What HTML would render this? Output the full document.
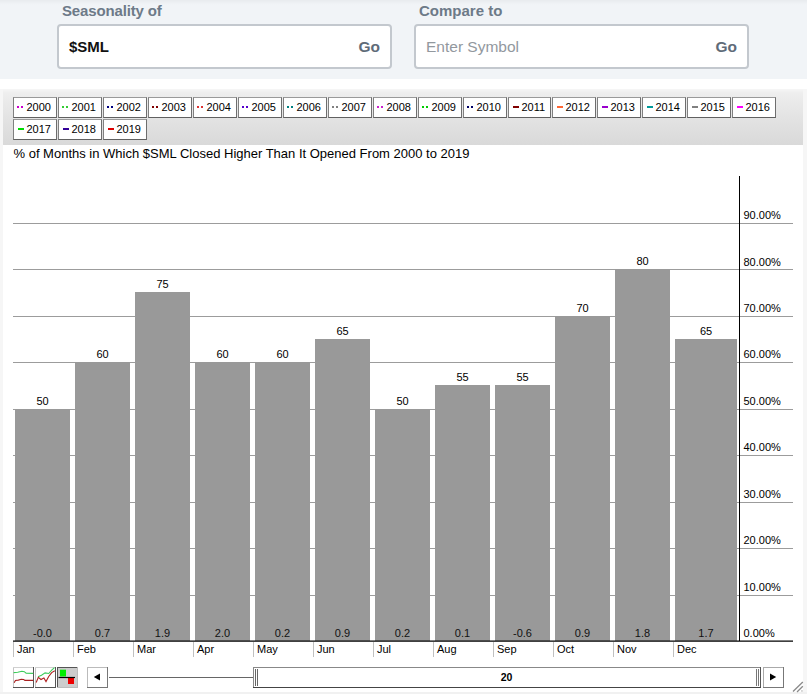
<!DOCTYPE html>
<html><head><meta charset="utf-8">
<style>
*{box-sizing:border-box}
html,body{margin:0;padding:0;width:807px;height:694px;overflow:hidden;background:#fff;font-family:"Liberation Sans",sans-serif}
.abs{position:absolute}
#hdr{position:absolute;left:0;top:0;width:807px;height:79px;background:linear-gradient(#e8ebee 0,#eef1f4 3px,#f1f4f7 5px)}
.lbl{position:absolute;top:2px;font-weight:bold;font-size:15px;color:#6d7a88;line-height:18px}
.inp{position:absolute;top:24px;height:45px;border:2px solid #c3c8ce;border-radius:4px;background:#fff}
.inp .v{position:absolute;left:10px;top:12px;font-size:15px;line-height:18px}
.inp .ph{color:#92989e;left:10px;font-size:15.5px}
.inp .go{position:absolute;right:10px;top:12px;font-size:15.5px;font-weight:bold;color:#5f6b78;line-height:18px}
#panel{position:absolute;left:0;top:89px;width:807px;height:605px;background:#fff;border-left:3px solid #f6f6f6;border-right:4px solid #f6f6f6}
#legend{position:absolute;left:3px;top:89px;width:800px;height:56px;background:linear-gradient(#f6f6f6 0,#eeeeee 4px,#e5e5e5 24px,#d9d9d9 100%)}
.lg{position:absolute;width:44px;height:21px;border:1px solid #808080;border-top-color:#9a9a9a;border-bottom-color:#606060;border-right-color:#6e6e6e;background:#fff;font-size:11px;line-height:19px;color:#000;white-space:nowrap}
.lg .sw{position:absolute;left:3px;top:8px}
.lg .sw2{position:absolute;left:4px;top:8px}
.lg span{position:absolute;left:12.5px;top:0}
#title{position:absolute;left:13.5px;top:146px;font-size:13px;line-height:16px;color:#000;white-space:nowrap}
svg text{font-family:"Liberation Sans",sans-serif}
</style></head><body>
<div id="hdr">
  <div class="lbl" style="left:62px;letter-spacing:-0.15px">Seasonality of</div>
  <div class="inp" style="left:57px;width:335px"><div class="v" style="font-weight:bold;color:#111">$SML</div><div class="go">Go</div></div>
  <div class="lbl" style="left:419px">Compare to</div>
  <div class="inp" style="left:414px;width:335px"><div class="v ph">Enter Symbol</div><div class="go">Go</div></div>
</div>
<div id="panel"></div>
<div id="legend"></div>
<div class="lg" style="left:13px;top:97px"><svg class="sw" width="7" height="2"><rect x="0" y="0" width="2" height="2" fill="#cc00cc"/><rect x="4" y="0" width="2" height="2" fill="#cc00cc"/></svg><span>2000</span></div>
<div class="lg" style="left:58px;top:97px"><svg class="sw" width="7" height="2"><rect x="0" y="0" width="2" height="2" fill="#33cc33"/><rect x="4" y="0" width="2" height="2" fill="#33cc33"/></svg><span>2001</span></div>
<div class="lg" style="left:103px;top:97px"><svg class="sw" width="7" height="2"><rect x="0" y="0" width="2" height="2" fill="#000080"/><rect x="4" y="0" width="2" height="2" fill="#000080"/></svg><span>2002</span></div>
<div class="lg" style="left:148px;top:97px"><svg class="sw" width="7" height="2"><rect x="0" y="0" width="2" height="2" fill="#800000"/><rect x="4" y="0" width="2" height="2" fill="#800000"/></svg><span>2003</span></div>
<div class="lg" style="left:193px;top:97px"><svg class="sw" width="7" height="2"><rect x="0" y="0" width="2" height="2" fill="#dd3333"/><rect x="4" y="0" width="2" height="2" fill="#dd3333"/></svg><span>2004</span></div>
<div class="lg" style="left:238px;top:97px"><svg class="sw" width="7" height="2"><rect x="0" y="0" width="2" height="2" fill="#5500cc"/><rect x="4" y="0" width="2" height="2" fill="#5500cc"/></svg><span>2005</span></div>
<div class="lg" style="left:283px;top:97px"><svg class="sw" width="7" height="2"><rect x="0" y="0" width="2" height="2" fill="#008080"/><rect x="4" y="0" width="2" height="2" fill="#008080"/></svg><span>2006</span></div>
<div class="lg" style="left:328px;top:97px"><svg class="sw" width="7" height="2"><rect x="0" y="0" width="2" height="2" fill="#808080"/><rect x="4" y="0" width="2" height="2" fill="#808080"/></svg><span>2007</span></div>
<div class="lg" style="left:373px;top:97px"><svg class="sw" width="7" height="2"><rect x="0" y="0" width="2" height="2" fill="#cc22cc"/><rect x="4" y="0" width="2" height="2" fill="#cc22cc"/></svg><span>2008</span></div>
<div class="lg" style="left:418px;top:97px"><svg class="sw" width="7" height="2"><rect x="0" y="0" width="2" height="2" fill="#00cc00"/><rect x="4" y="0" width="2" height="2" fill="#00cc00"/></svg><span>2009</span></div>
<div class="lg" style="left:463px;top:97px"><svg class="sw" width="7" height="2"><rect x="0" y="0" width="2" height="2" fill="#000066"/><rect x="4" y="0" width="2" height="2" fill="#000066"/></svg><span>2010</span></div>
<div class="lg" style="left:508px;top:97px;width:43px"><svg class="sw2" width="7" height="2"><rect x="0" y="0" width="6" height="2" fill="#800000"/></svg><span>2011</span></div>
<div class="lg" style="left:552px;top:97px"><svg class="sw2" width="7" height="2"><rect x="0" y="0" width="6" height="2" fill="#ff6633"/></svg><span>2012</span></div>
<div class="lg" style="left:597px;top:97px"><svg class="sw2" width="7" height="2"><rect x="0" y="0" width="6" height="2" fill="#9900cc"/></svg><span>2013</span></div>
<div class="lg" style="left:642px;top:97px"><svg class="sw2" width="7" height="2"><rect x="0" y="0" width="6" height="2" fill="#009999"/></svg><span>2014</span></div>
<div class="lg" style="left:687px;top:97px"><svg class="sw2" width="7" height="2"><rect x="0" y="0" width="6" height="2" fill="#808080"/></svg><span>2015</span></div>
<div class="lg" style="left:732px;top:97px"><svg class="sw2" width="7" height="2"><rect x="0" y="0" width="6" height="2" fill="#ff00ff"/></svg><span>2016</span></div>
<div class="lg" style="left:13px;top:119px"><svg class="sw2" width="7" height="2"><rect x="0" y="0" width="6" height="2" fill="#00dd00"/></svg><span>2017</span></div>
<div class="lg" style="left:58px;top:119px"><svg class="sw2" width="7" height="2"><rect x="0" y="0" width="6" height="2" fill="#330099"/></svg><span>2018</span></div>
<div class="lg" style="left:103px;top:119px"><svg class="sw2" width="7" height="2"><rect x="0" y="0" width="6" height="2" fill="#dd0000"/></svg><span>2019</span></div>
<div id="title">% of Months in Which $SML Closed Higher Than It Opened From 2000 to 2019</div>
<svg class="abs" style="left:0;top:0" width="807" height="694">
<line x1="13" y1="595.5" x2="793" y2="595.5" stroke="#9c9c9c" stroke-width="1"/>
<line x1="13" y1="548.5" x2="793" y2="548.5" stroke="#9c9c9c" stroke-width="1"/>
<line x1="13" y1="502.5" x2="793" y2="502.5" stroke="#9c9c9c" stroke-width="1"/>
<line x1="13" y1="455.5" x2="793" y2="455.5" stroke="#9c9c9c" stroke-width="1"/>
<line x1="13" y1="409.5" x2="793" y2="409.5" stroke="#9c9c9c" stroke-width="1"/>
<line x1="13" y1="362.5" x2="793" y2="362.5" stroke="#9c9c9c" stroke-width="1"/>
<line x1="13" y1="316.5" x2="793" y2="316.5" stroke="#9c9c9c" stroke-width="1"/>
<line x1="13" y1="269.5" x2="793" y2="269.5" stroke="#9c9c9c" stroke-width="1"/>
<line x1="13" y1="223.5" x2="793" y2="223.5" stroke="#9c9c9c" stroke-width="1"/>
<rect x="15" y="409.00" width="55" height="232.00" fill="#999999"/>
<text x="42.5" y="405.0" text-anchor="middle" font-size="11" fill="#000">50</text>
<text x="42.5" y="637" text-anchor="middle" font-size="11" fill="#111">-0.0</text>
<rect x="75" y="362.00" width="55" height="279.00" fill="#999999"/>
<text x="102.5" y="358.0" text-anchor="middle" font-size="11" fill="#000">60</text>
<text x="102.5" y="637" text-anchor="middle" font-size="11" fill="#111">0.7</text>
<rect x="135" y="292.00" width="55" height="349.00" fill="#999999"/>
<text x="162.5" y="288.0" text-anchor="middle" font-size="11" fill="#000">75</text>
<text x="162.5" y="637" text-anchor="middle" font-size="11" fill="#111">1.9</text>
<rect x="195" y="362.00" width="55" height="279.00" fill="#999999"/>
<text x="222.5" y="358.0" text-anchor="middle" font-size="11" fill="#000">60</text>
<text x="222.5" y="637" text-anchor="middle" font-size="11" fill="#111">2.0</text>
<rect x="255" y="362.00" width="55" height="279.00" fill="#999999"/>
<text x="282.5" y="358.0" text-anchor="middle" font-size="11" fill="#000">60</text>
<text x="282.5" y="637" text-anchor="middle" font-size="11" fill="#111">0.2</text>
<rect x="315" y="339.00" width="55" height="302.00" fill="#999999"/>
<text x="342.5" y="335.0" text-anchor="middle" font-size="11" fill="#000">65</text>
<text x="342.5" y="637" text-anchor="middle" font-size="11" fill="#111">0.9</text>
<rect x="375" y="409.00" width="55" height="232.00" fill="#999999"/>
<text x="402.5" y="405.0" text-anchor="middle" font-size="11" fill="#000">50</text>
<text x="402.5" y="637" text-anchor="middle" font-size="11" fill="#111">0.2</text>
<rect x="435" y="385.00" width="55" height="256.00" fill="#999999"/>
<text x="462.5" y="381.0" text-anchor="middle" font-size="11" fill="#000">55</text>
<text x="462.5" y="637" text-anchor="middle" font-size="11" fill="#111">0.1</text>
<rect x="495" y="385.00" width="55" height="256.00" fill="#999999"/>
<text x="522.5" y="381.0" text-anchor="middle" font-size="11" fill="#000">55</text>
<text x="522.5" y="637" text-anchor="middle" font-size="11" fill="#111">-0.6</text>
<rect x="555" y="316.00" width="55" height="325.00" fill="#999999"/>
<text x="582.5" y="312.0" text-anchor="middle" font-size="11" fill="#000">70</text>
<text x="582.5" y="637" text-anchor="middle" font-size="11" fill="#111">0.9</text>
<rect x="615" y="269.00" width="55" height="372.00" fill="#999999"/>
<text x="642.5" y="265.0" text-anchor="middle" font-size="11" fill="#000">80</text>
<text x="642.5" y="637" text-anchor="middle" font-size="11" fill="#111">1.8</text>
<rect x="675" y="339.00" width="62" height="302.00" fill="#999999"/>
<text x="706.0" y="335.0" text-anchor="middle" font-size="11" fill="#000">65</text>
<text x="706.0" y="637" text-anchor="middle" font-size="11" fill="#111">1.7</text>
<line x1="739.5" y1="176" x2="739.5" y2="641" stroke="#000" stroke-width="1"/>
<line x1="13" y1="641.2" x2="793" y2="641.2" stroke="#000" stroke-width="1.3"/>
<text x="743.5" y="637.0" font-size="11" fill="#000">0.00%</text>
<text x="743.5" y="590.6" font-size="11" fill="#000">10.00%</text>
<text x="743.5" y="544.1" font-size="11" fill="#000">20.00%</text>
<text x="743.5" y="497.7" font-size="11" fill="#000">30.00%</text>
<text x="743.5" y="451.2" font-size="11" fill="#000">40.00%</text>
<text x="743.5" y="404.8" font-size="11" fill="#000">50.00%</text>
<text x="743.5" y="358.4" font-size="11" fill="#000">60.00%</text>
<text x="743.5" y="311.9" font-size="11" fill="#000">70.00%</text>
<text x="743.5" y="265.5" font-size="11" fill="#000">80.00%</text>
<text x="743.5" y="219.0" font-size="11" fill="#000">90.00%</text>
<line x1="13.5" y1="642" x2="13.5" y2="657" stroke="#c0c0c0" stroke-width="1"/>
<text x="17.0" y="653" font-size="11" fill="#000">Jan</text>
<line x1="73.5" y1="642" x2="73.5" y2="657" stroke="#c0c0c0" stroke-width="1"/>
<text x="77.0" y="653" font-size="11" fill="#000">Feb</text>
<line x1="133.5" y1="642" x2="133.5" y2="657" stroke="#c0c0c0" stroke-width="1"/>
<text x="137.0" y="653" font-size="11" fill="#000">Mar</text>
<line x1="193.5" y1="642" x2="193.5" y2="657" stroke="#c0c0c0" stroke-width="1"/>
<text x="197.0" y="653" font-size="11" fill="#000">Apr</text>
<line x1="253.5" y1="642" x2="253.5" y2="657" stroke="#c0c0c0" stroke-width="1"/>
<text x="257.0" y="653" font-size="11" fill="#000">May</text>
<line x1="313.5" y1="642" x2="313.5" y2="657" stroke="#c0c0c0" stroke-width="1"/>
<text x="317.0" y="653" font-size="11" fill="#000">Jun</text>
<line x1="373.5" y1="642" x2="373.5" y2="657" stroke="#c0c0c0" stroke-width="1"/>
<text x="377.0" y="653" font-size="11" fill="#000">Jul</text>
<line x1="433.5" y1="642" x2="433.5" y2="657" stroke="#c0c0c0" stroke-width="1"/>
<text x="437.0" y="653" font-size="11" fill="#000">Aug</text>
<line x1="493.5" y1="642" x2="493.5" y2="657" stroke="#c0c0c0" stroke-width="1"/>
<text x="497.0" y="653" font-size="11" fill="#000">Sep</text>
<line x1="553.5" y1="642" x2="553.5" y2="657" stroke="#c0c0c0" stroke-width="1"/>
<text x="557.0" y="653" font-size="11" fill="#000">Oct</text>
<line x1="613.5" y1="642" x2="613.5" y2="657" stroke="#c0c0c0" stroke-width="1"/>
<text x="617.0" y="653" font-size="11" fill="#000">Nov</text>
<line x1="673.5" y1="642" x2="673.5" y2="657" stroke="#c0c0c0" stroke-width="1"/>
<text x="677.0" y="653" font-size="11" fill="#000">Dec</text>
</svg>
<svg class="abs" style="left:0;top:640px" width="807" height="54">
<!-- icon1 at (13,667) -->
<g transform="translate(13,27)">
  <rect x="0" y="0" width="21" height="21" fill="#fff"/>
  <line x1="0.5" y1="0" x2="0.5" y2="21" stroke="#c4c4c4"/>
  <line x1="0" y1="0.5" x2="21" y2="0.5" stroke="#d0d0d0"/>
  <line x1="20.5" y1="0" x2="20.5" y2="21" stroke="#555"/>
  <line x1="0" y1="20.5" x2="21" y2="20.5" stroke="#555"/>
  <polyline points="0.6,5.6 4.7,5.3 8.9,4.3 11.3,4.7 13.1,6.2 20.2,6.4" fill="none" stroke="#3ccc5a" stroke-width="1.1"/>
  <polyline points="1.2,15.7 2.4,13.4 5.3,13.1 8.3,12.2 10.7,12.5 11.9,13.4 20.2,13.4" fill="none" stroke="#a82020" stroke-width="1.1"/>
</g>
<g transform="translate(35,27)">
  <rect x="0" y="0" width="21" height="21" fill="#fff"/>
  <line x1="0.5" y1="0" x2="0.5" y2="21" stroke="#c4c4c4"/>
  <line x1="0" y1="0.5" x2="21" y2="0.5" stroke="#d0d0d0"/>
  <line x1="20.5" y1="0" x2="20.5" y2="21" stroke="#555"/>
  <line x1="0" y1="20.5" x2="21" y2="20.5" stroke="#555"/>
  <polyline points="3,9.8 6.5,8.3 10.1,5.9 13.7,6.5 16.7,3.2 19.5,0.6" fill="none" stroke="#3ccc5a" stroke-width="1.1"/>
  <polyline points="1.2,15.5 3.3,10.4 6,12.5 8.9,11 11,14.6 13.7,9.5 16.7,5.6 19.8,3.8" fill="none" stroke="#b02020" stroke-width="1.1"/>
</g>
<g transform="translate(57,27)">
  <rect x="0" y="0" width="21" height="21" fill="#cdcdcd"/>
  <line x1="0.5" y1="0" x2="0.5" y2="21" stroke="#555"/>
  <line x1="0" y1="0.5" x2="21" y2="0.5" stroke="#555"/>
  <line x1="20.5" y1="0" x2="20.5" y2="21" stroke="#bbb"/>
  <line x1="0" y1="20.5" x2="21" y2="20.5" stroke="#bbb"/>
  <rect x="3" y="2.7" width="6" height="6.8" fill="#00ee00"/>
  <rect x="11" y="11" width="6" height="6" fill="#ee0000"/>
  <line x1="1.5" y1="10.5" x2="18" y2="10.5" stroke="#000" stroke-width="1.2"/>
</g>
<!-- left arrow button 87..108 x 667..688 -->
<g transform="translate(87,27)">
  <rect x="0" y="0" width="21" height="21" fill="#fff"/>
  <line x1="0.5" y1="0" x2="0.5" y2="21" stroke="#bbb"/>
  <line x1="0" y1="0.5" x2="21" y2="0.5" stroke="#bbb"/>
  <line x1="20.5" y1="0" x2="20.5" y2="21" stroke="#777"/>
  <line x1="0" y1="20.5" x2="21" y2="20.5" stroke="#777"/>
  <polygon points="6.8,10 13,6.6 13,13.4" fill="#000"/>
</g>
<!-- track -->
<line x1="109" y1="37.5" x2="253" y2="37.5" stroke="#666" stroke-width="1"/>
<!-- thumb 253..761 x 667..688 -->
<g transform="translate(253,27)">
  <rect x="0" y="0" width="508" height="21" fill="#fff"/>
  <line x1="0.5" y1="0" x2="0.5" y2="21" stroke="#888"/>
  <line x1="0" y1="0.5" x2="508" y2="0.5" stroke="#888"/>
  <line x1="507.5" y1="0" x2="507.5" y2="21" stroke="#555"/>
  <line x1="0" y1="20.5" x2="508" y2="20.5" stroke="#444" stroke-width="1.2"/>
  <line x1="2.5" y1="2" x2="2.5" y2="19" stroke="#666"/>
  <line x1="4.5" y1="2" x2="4.5" y2="19" stroke="#666"/>
  <line x1="503.5" y1="2" x2="503.5" y2="19" stroke="#777"/>
  <line x1="505.5" y1="2" x2="505.5" y2="19" stroke="#777"/>
  <text x="253.5" y="14" text-anchor="middle" font-size="10.5" font-weight="bold" fill="#000">20</text>
</g>
<!-- right arrow button 763..784 -->
<g transform="translate(763,27)">
  <rect x="0" y="0" width="21" height="21" fill="#fff"/>
  <line x1="0.5" y1="0" x2="0.5" y2="21" stroke="#aaa"/>
  <line x1="0" y1="0.5" x2="21" y2="0.5" stroke="#aaa"/>
  <line x1="20.5" y1="0" x2="20.5" y2="21" stroke="#777"/>
  <line x1="0" y1="20.5" x2="21" y2="20.5" stroke="#777"/>
  <polygon points="7,6.6 13.2,10 7,13.4" fill="#000"/>
</g>
<!-- resize grip -->
</svg>
<div class="abs" style="left:0;top:692px;width:807px;height:2px;background:#f1f1f1"></div>
<svg class="abs" style="left:780px;top:670px" width="27" height="24">
<line x1="13" y1="21.5" x2="22.8" y2="12" stroke="#8a8a8a" stroke-width="1.3"/>
<line x1="17" y1="22" x2="22.8" y2="16.3" stroke="#8a8a8a" stroke-width="1.3"/>
<rect x="21.3" y="20.3" width="1.3" height="1.3" fill="#aaa"/>
</svg>
</body></html>
